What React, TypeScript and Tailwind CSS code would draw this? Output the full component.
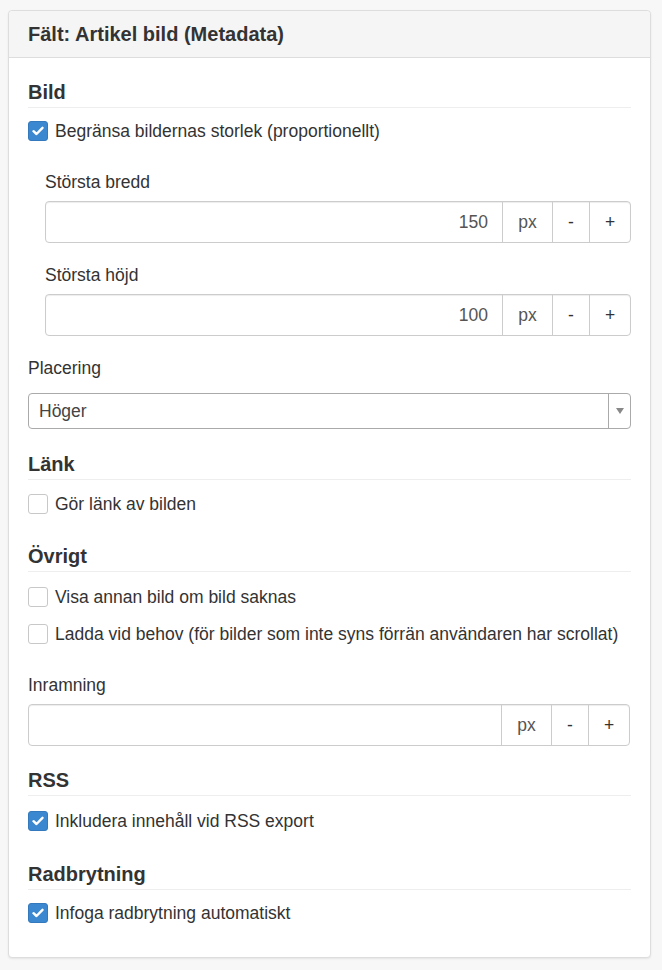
import React from "react";

function Check({ checked }: { checked?: boolean }) {
    return checked ? (
        <span className="w-[20px] h-[20px] shrink-0 rounded-[3px] bg-[#3b87d0] border border-[#3579bd] flex items-center justify-center">
            <svg width="12" height="10" viewBox="0 0 12 10">
                <path d="M1.5 5.2 L4.5 8 L10.5 1.8" fill="none" stroke="#fff" strokeWidth="2.4" strokeLinecap="round" strokeLinejoin="round" />
            </svg>
        </span>
    ) : (
        <span className="w-[20px] h-[20px] shrink-0 rounded-[3px] bg-white border border-[#c8c8c8]" />
    );
}

function CheckRow({ checked, label, className = "" }: { checked?: boolean; label: string; className?: string }) {
    return (
        <label className={`flex items-center gap-[7px] h-[24px] text-[17.5px] text-[#333] ${className}`}>
            <Check checked={checked} />
            <span>{label}</span>
        </label>
    );
}

function Heading({ children, className = "" }: { children: React.ReactNode; className?: string }) {
    return (
        <h3 className={`text-[20px] leading-[24px] font-bold text-[#333] pb-[3px] border-b border-[#eeeeee] ${className}`}>
            {children}
        </h3>
    );
}

function Label({ children, className = "" }: { children: React.ReactNode; className?: string }) {
    return <div className={`h-[22px] leading-[22px] text-[17.5px] text-[#333] ${className}`}>{children}</div>;
}

function PxInput({ value, className = "" }: { value?: string; className?: string }) {
    return (
        <div className={`flex h-[42px] border border-[#cccccc] rounded-[4px] bg-white shadow-[inset_0_1px_1px_rgba(0,0,0,0.075)] text-[17.5px] ${className}`}>
            <div className="flex-1 flex items-center justify-end pr-[14px] text-[#555]">{value}</div>
            <div className="w-[50px] border-l border-[#cccccc] flex items-center justify-center text-[#555]">px</div>
            <div className="w-[37px] border-l border-[#cccccc] flex items-center justify-center text-[#333]">-</div>
            <div className="w-[41px] border-l border-[#cccccc] flex items-center justify-center text-[#333]">+</div>
        </div>
    );
}

export default function App() {
    return (
        <div className="min-h-[970px] bg-[#f7f7f7] pt-[10px] pl-[8px] font-['Liberation_Sans',Arial,sans-serif]">
            <div className="w-[643px] bg-white border border-[#dddddd] rounded-[4px] shadow-[0_1px_2px_rgba(0,0,0,0.08)]">
                {/* header */}
                <div className="h-[47px] bg-[#f5f5f5] border-b border-[#dddddd] rounded-t-[4px] flex items-center px-[19px]">
                    <h2 className="text-[20px] font-bold text-[#333]">Fält: Artikel bild (Metadata)</h2>
                </div>

                <div className="px-[19px] pt-[22px] pb-[32px]">
                    <Heading>Bild</Heading>
                    <CheckRow checked label="Begränsa bildernas storlek (proportionellt)" className="mt-[11px]" />

                    <div className="pl-[17px]">
                        <Label className="mt-[28px]">Största bredd</Label>
                        <PxInput value="150" className="mt-[8px]" />
                        <Label className="mt-[21px]">Största höjd</Label>
                        <PxInput value="100" className="mt-[8px]" />
                    </div>

                    <Label className="mt-[21px]">Placering</Label>
                    <div className="mt-[14px] h-[36px] flex border border-[#aaaaaa] rounded-[4px] bg-white text-[17.5px]">
                        <div className="flex-1 flex items-center pl-[10px] text-[#444]">Höger</div>
                        <div className="w-[22px] border-l border-[#aaaaaa] flex items-center justify-center">
                            <svg width="8" height="6" viewBox="0 0 8 6">
                                <path d="M0 0 H8 L4 6 Z" fill="#888" />
                            </svg>
                        </div>
                    </div>

                    <Heading className="mt-[23px]">Länk</Heading>
                    <CheckRow label="Gör länk av bilden" className="mt-[12px]" />

                    <Heading className="mt-[28px]">Övrigt</Heading>
                    <CheckRow label="Visa annan bild om bild saknas" className="mt-[13px]" />
                    <CheckRow label="Ladda vid behov (för bilder som inte syns förrän användaren har scrollat)" className="mt-[13px]" />

                    <Label className="mt-[28px]">Inramning</Label>
                    <PxInput className="mt-[8px] mr-[1px]" />

                    <Heading className="mt-[22px]">RSS</Heading>
                    <CheckRow checked label="Inkludera innehåll vid RSS export" className="mt-[13px]" />

                    <Heading className="mt-[29px]">Radbrytning</Heading>
                    <CheckRow checked label="Infoga radbrytning automatiskt" className="mt-[11px]" />
                </div>
            </div>
        </div>
    );
}
